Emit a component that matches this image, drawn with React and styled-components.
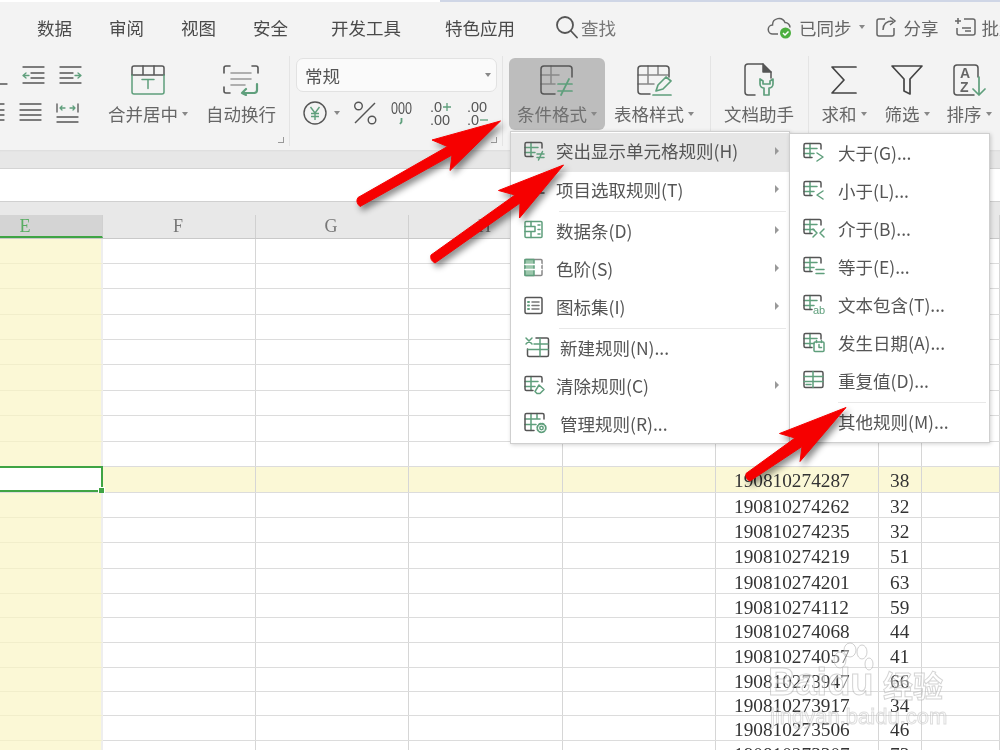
import React from "react";
import styled, { createGlobalStyle } from "styled-components";

const DARK = "#555";
const GREEN = "#5f9f7c";

const GlobalStyle = createGlobalStyle`
  html, body { margin: 0; padding: 0; background: #fff; }
  body { font-family: "Noto Sans CJK SC", "Noto Sans", sans-serif; }
`;

const Page = styled.div`
  position: relative;
  width: 1000px;
  height: 750px;
  overflow: hidden;
  background: #fff;
  filter: blur(0.4px);
`;

const TopEdge = styled.div`
  height: 2px;
  margin-left: 440px;
  background: #cfd6e6;
`;

const TabBar = styled.div`
  display: flex;
  align-items: center;
  height: 50px;
  padding: 0 0 0 37px;
  box-sizing: border-box;
  background: #f3f3f3;
  white-space: nowrap;
  font-size: 17.5px;
  color: #4a4a4a;
`;

const Tab = styled.span`
  margin-left: ${(p) => p.$gap || 0}px;
`;

const SearchTab = styled.span`
  display: flex;
  align-items: center;
  gap: 3px;
  margin-left: 40px;
  color: #777;
`;

const TabRight = styled.div`
  display: flex;
  align-items: center;
  margin-left: 151px;
  color: #666;
`;

const TabAction = styled.span`
  display: flex;
  align-items: center;
  gap: 6px;
  margin-right: ${(p) => p.$gap || 0}px;
`;

const Caret = styled.i`
  display: inline-block;
  flex: none;
  width: 0;
  height: 0;
  margin-left: ${(p) => p.$gap ?? 4}px;
  border-left: 3.5px solid transparent;
  border-right: 3.5px solid transparent;
  border-top: 4px solid #888;
`;

const Ribbon = styled.div`
  display: flex;
  height: 98px;
  background: #f3f3f3;
  box-sizing: border-box;
  padding-top: 4px;
`;

const AlignBlock = styled.div`
  flex: none;
  width: 100px;
  padding-top: 9px;
  box-sizing: border-box;
`;

const ToolRow = styled.div`
  display: flex;
  gap: 14px;
  height: 37px;
  margin-left: ${(p) => p.$x}px;
`;

const BigButton = styled.div`
  display: flex;
  flex-direction: column;
  align-items: center;
  flex: none;
  width: ${(p) => p.$w}px;
  height: 72px;
  margin: 2px 0 0;
  padding-top: 4px;
  box-sizing: border-box;
  border-radius: 6px;
  background: ${(p) => (p.$active ? "#bdbdbd" : "transparent")};
  color: ${(p) => (p.$active ? "#6f6f6f" : "#666")};
`;

const IconSlot = styled.div`
  height: 35px;
  display: flex;
  align-items: center;
  justify-content: center;
`;

const BigLabel = styled.div`
  display: flex;
  align-items: center;
  margin-top: 4px;
  font-size: 17.5px;
  line-height: 26px;
  white-space: nowrap;
`;

const GroupEnd = styled.div`
  position: relative;
  flex: none;
  width: 1px;
  height: 90px;
  margin: 0 ${(p) => p.$right || 0}px 0 ${(p) => p.$left || 0}px;
  background: #e4e4e4;
`;

const CornerMark = styled.i`
  position: absolute;
  left: -11px;
  bottom: 3px;
  width: 5px;
  height: 5px;
  border-right: 1px solid #999;
  border-bottom: 1px solid #999;
`;

const NumberBlock = styled.div`
  flex: none;
  width: 201px;
  margin-top: 2px;
`;

const FormatSelect = styled.div`
  display: flex;
  align-items: center;
  justify-content: space-between;
  height: 34px;
  padding: 0 5px 0 8px;
  box-sizing: border-box;
  border: 1px solid #e2e2e2;
  border-radius: 7px;
  background: #fafafa;
  font-size: 17.5px;
  color: #555;
`;

const NumberRow = styled.div`
  display: flex;
  align-items: center;
  margin-top: 8px;
  padding-left: 7px;
`;

const NumberTool = styled.div`
  display: flex;
  align-items: center;
  margin-right: ${(p) => p.$gap}px;
`;

const Band = styled.div`
  height: 18px;
  background: #e7e7e7;
  box-shadow: inset 0 2px 2px -1px #dcdcdc;
`;

const FormulaBar = styled.div`
  height: 34px;
  box-sizing: border-box;
  background: #fff;
  border-top: 1px solid #d4d4d4;
  border-bottom: 1px solid #d0d0d0;
`;

const HeaderRow = styled.div`
  display: flex;
  align-items: flex-end;
  height: 37px;
  background: #e8e8e8;
  border-bottom: 1px solid #c9c9c9;
  box-sizing: border-box;
`;

const HeaderCell = styled.div`
  flex: none;
  width: ${(p) => p.$w}px;
  height: 23px;
  line-height: 23px;
  box-sizing: border-box;
  text-align: center;
  font-family: "Liberation Serif", serif;
  font-size: 18px;
  color: ${(p) => (p.$active ? "#58ad62" : "#777")};
  background: ${(p) => (p.$active ? "#d4d4d4" : "transparent")};
  border-right: 1px solid #d0d0d0;
  border-bottom: ${(p) => (p.$active ? "2px solid #3fa444" : "0")};
  /* column E starts off screen, so its letter sits left of the visible middle */
  padding-right: ${(p) => (p.$active ? 52 : 2)}px;
`;

const Row = styled.div`
  display: flex;
  height: ${(p) => p.$h}px;
  box-sizing: border-box;
  background: ${(p) => (p.$hot ? "#fbf8d6" : "#fff")};
  border-bottom: 1px solid #dcdcdc;
`;

const Cell = styled.div`
  position: relative;
  flex: none;
  width: ${(p) => p.$w}px;
  box-sizing: border-box;
  padding-left: ${(p) => p.$pad || 0}px;
  border-right: 1px solid #d6d6d6;
  font-family: "Liberation Serif", serif;
  font-size: 19.3px;
  line-height: 28px;
  color: #333;
  white-space: nowrap;
`;

const ECell = styled(Cell)`
  background: #fbf8d6;
  border-right: 2px solid #eeeeee;
  border-bottom: 1px solid #f1eecb;
  margin-bottom: -1px;
`;

const SelectedCell = styled(Cell)`
  background: #fff;
  border: 2px solid #3fa444;
  border-left: 0;
  margin-top: -1px;
`;

const FillHandle = styled.i`
  position: absolute;
  right: -4px;
  bottom: -4px;
  width: 5px;
  height: 5px;
  background: #3fa444;
  border: 1px solid #fff;
`;

const Menu = styled.div`
  position: absolute;
  left: ${(p) => p.$x}px;
  top: ${(p) => p.$y}px;
  width: ${(p) => p.$w}px;
  height: ${(p) => p.$h}px;
  box-sizing: border-box;
  padding-top: 1px;
  background: #fff;
  border: 1px solid #cfcfcf;
  box-shadow: 1px 1px 4px rgba(0, 0, 0, 0.18);
  font-size: 17.5px;
  color: #555;
`;

const MenuItem = styled.div`
  display: flex;
  align-items: center;
  box-sizing: border-box;
  height: ${(p) => p.$h || 38}px;
  padding: 0 0 4px 12px;
  background: ${(p) => (p.$on ? "#e6e6e6" : "transparent")};
  white-space: nowrap;
`;

const MenuIconSlot = styled.div`
  flex: none;
  display: flex;
  width: ${(p) => p.$w}px;
`;

const MenuText = styled.span`
  flex: 1;
`;

const SubArrow = styled.i`
  flex: none;
  width: 0;
  height: 0;
  margin-right: 10px;
  border-top: 4px solid transparent;
  border-bottom: 4px solid transparent;
  border-left: 4px solid #999;
`;

const MenuSep = styled.div`
  height: 1px;
  margin: ${(p) => p.$m || 0}px 3px ${(p) => p.$m || 0}px 48px;
  background: #e8e8e8;
`;

const Arrows = styled.svg`
  position: absolute;
  left: 0;
  top: 0;
  width: 1000px;
  height: 750px;
  filter: drop-shadow(3px 4px 3px rgba(0, 0, 0, 0.45));
  pointer-events: none;
`;

const WatermarkLogo = styled.div`
  position: absolute;
  left: 768px;
  top: 660px;
  font-family: "Liberation Sans", sans-serif;
  font-size: 38px;
  font-weight: 700;
  line-height: 44px;
  color: rgba(255, 255, 255, 0.45);
  -webkit-text-stroke: 1px rgba(170, 170, 170, 0.5);
`;

const WatermarkCn = styled.div`
  position: absolute;
  left: 883px;
  top: 662px;
  font-size: 30px;
  font-weight: 700;
  line-height: 44px;
  color: rgba(255, 255, 255, 0.4);
  -webkit-text-stroke: 1px rgba(170, 170, 170, 0.5);
`;

const WatermarkUrl = styled.div`
  position: absolute;
  left: 770px;
  top: 704px;
  font-family: "Liberation Sans", sans-serif;
  font-size: 22px;
  line-height: 26px;
  color: rgba(255, 255, 255, 0.4);
  -webkit-text-stroke: 1px rgba(170, 170, 170, 0.4);
`;

const WatermarkPaw = styled.svg`
  position: absolute;
  left: 826px;
  top: 642px;
  fill: rgba(255, 255, 255, 0.4);
  stroke: rgba(170, 170, 170, 0.55);
`;

const Ico = ({ w = 24, h = 22, sw = 1.5, children }) => (
  <svg width={w} height={h} viewBox={`0 0 ${w} ${h}`} fill="none" strokeWidth={sw} strokeLinecap="round" strokeLinejoin="round">
    {children}
  </svg>
);

// the small table most menu icons share, dark frame with green inner lines
const TableBase = () => (
  <>
    <path d="M2 7.5h13M2 12.5h10M8 2.5v14" stroke={GREEN} />
    <path d="M19 8V4a1.5 1.5 0 0 0-1.5-1.5h-14A1.5 1.5 0 0 0 2 4v11a1.5 1.5 0 0 0 1.5 1.5H10" stroke={DARK} />
  </>
);

const menuIcons = {
  neq: <Ico><TableBase /><path d="M14 14h7M14 17.5h7M19.5 11.5l-4 8.5" stroke={GREEN} /></Ico>,
  gt: <Ico><TableBase /><path d="M15 12l6 4-6 4" stroke={GREEN} /></Ico>,
  lt: <Ico><TableBase /><path d="M21 12l-6 4 6 4" stroke={GREEN} /></Ico>,
  between: <Ico><TableBase /><path d="M11 12l4 4-4 4M22 12l-4 4 4 4" stroke={GREEN} /></Ico>,
  eq: <Ico><TableBase /><path d="M14 14.5h8M14 18.5h8" stroke={GREEN} /></Ico>,
  text: (
    <Ico>
      <TableBase />
      <text x="11" y="21" fontFamily="Liberation Sans" fontSize="11" fill={GREEN}>ab</text>
    </Ico>
  ),
  date: (
    <Ico>
      <TableBase />
      <rect x="12" y="11" width="10" height="9.5" rx="1" stroke={GREEN} />
      <path d="M14.5 9.5v2M19.5 9.5v2M17 13.5v3h2.5" stroke={GREEN} />
    </Ico>
  ),
  dup: (
    <Ico>
      <rect x="2" y="2.5" width="19" height="16" rx="1.5" stroke={DARK} />
      <path d="M2 7.5h19M2 12.5h19M11 2.5v16" stroke={GREEN} />
      <path d="M4 15.5h5" stroke={GREEN} />
    </Ico>
  ),
  top: <Ico><TableBase /><path d="M13 15h8" stroke={DARK} /></Ico>,
  bars: (
    <Ico>
      <rect x="2" y="2.5" width="17" height="16" rx="1" stroke={GREEN} />
      <path d="M2 7.5h10v5H2M8 2.5v5M8 12.5v6M15 6h2M15 10.5h2M15 15h2" stroke={GREEN} />
    </Ico>
  ),
  scale: (
    <Ico>
      <rect x="2" y="2.5" width="17" height="16" rx="1" stroke="#888" />
      <rect x="2" y="2.5" width="9" height="16" fill="#9cc7ac" stroke={GREEN} />
      <path d="M2 7.5h17M2 12.5h17" stroke="#fff" />
    </Ico>
  ),
  iconset: (
    <Ico>
      <rect x="2" y="2.5" width="17" height="16" rx="1.5" stroke={DARK} />
      <path d="M9 7h7M9 10.5h7M9 14h7" stroke="#777" />
      <path d="M5 7h1M5 10.5h1M5 14h1" stroke={GREEN} strokeWidth="2" />
    </Ico>
  ),
  create: (
    <Ico w={28} h={24}>
      <path d="M3 3l6 6M9 3l-6 6" stroke={GREEN} />
      <path d="M13 3h11a1.5 1.5 0 0 1 1.5 1.5V20a1.5 1.5 0 0 1-1.5 1.5H6A1.5 1.5 0 0 1 4.5 20v-6" stroke={DARK} />
      <path d="M5 14.5h20M17 3v18M11 9h14" stroke={GREEN} />
    </Ico>
  ),
  clear: (
    <Ico>
      <TableBase />
      <path d="M16 11l5 4.5-4 4h-3l-2-2z" stroke={GREEN} />
    </Ico>
  ),
  manage: (
    <Ico w={26} h={24}>
      <path d="M2 8h15M2 13.5h11M8 2.5v17M14 2.5v5" stroke={GREEN} />
      <path d="M21 8V4a1.5 1.5 0 0 0-1.5-1.5h-16A1.5 1.5 0 0 0 2 4v14a1.5 1.5 0 0 0 1.5 1.5H11" stroke={DARK} />
      <circle cx="18.5" cy="17" r="1.7" stroke={GREEN} />
      <circle cx="18.5" cy="17" r="4.3" stroke={GREEN} strokeWidth="1.8" strokeDasharray="2 1.4" />
    </Ico>
  ),
};

const bigIcons = {
  merge: (
    <Ico w={36} h={32}>
      <path d="M2 11V4a2 2 0 0 1 2-2h28a2 2 0 0 1 2 2v7" stroke={DARK} />
      <path d="M2 11h32M13 2v9M24 2v9" stroke={DARK} />
      <path d="M2 11v17a2 2 0 0 0 2 2h28a2 2 0 0 0 2-2V11" stroke={GREEN} />
      <path d="M12 15.5h12M18 15.5v9" stroke={GREEN} />
    </Ico>
  ),
  wrap: (
    <Ico w={38} h={32} sw={1.6}>
      <path d="M2 9V4a2 2 0 0 1 2-2h4M30 2h4a2 2 0 0 1 2 2v5M2 23v4a2 2 0 0 0 2 2h4" stroke={DARK} />
      <path d="M9 9h20M9 15h20M9 21h14" stroke="#999" />
      <path d="M35 20v6a3 3 0 0 1-3 3H20M24 25l-4 4 4 2" stroke={GREEN} strokeWidth="2.2" />
    </Ico>
  ),
  cond: (
    <Ico w={36} h={32}>
      <path d="M2 11h18M2 20h14M12 2v18" stroke="#888" />
      <path d="M33 13V5a3 3 0 0 0-3-3H5a3 3 0 0 0-3 3v22a3 3 0 0 0 3 3h11" stroke={DARK} />
      <path d="M19 20h14M19 27h14M30 15l-8 16" stroke={GREEN} strokeWidth="1.7" />
    </Ico>
  ),
  style: (
    <Ico w={36} h={32}>
      <path d="M2 11h30M2 20h16M12 2v18M22 2v9" stroke="#888" />
      <path d="M33 13V5a3 3 0 0 0-3-3H5a3 3 0 0 0-3 3v22a3 3 0 0 0 3 3h9" stroke={DARK} />
      <path d="M20 27l2-6 8-8 5 4-8 8zM17 31h18" stroke={GREEN} strokeWidth="1.7" />
    </Ico>
  ),
  helper: (
    <Ico w={32} h={36}>
      <path d="M12 33H5a3 3 0 0 1-3-3V5a3 3 0 0 1 3-3h15l8 8v6" stroke={DARK} />
      <path d="M20 2v8h8" fill={DARK} stroke={DARK} />
      <path d="M17 17v5a4 4 0 0 0 4 4v7h5v-7a4 4 0 0 0 4-4v-5l-3 2v3h-7v-3z" stroke={GREEN} strokeWidth="1.7" />
    </Ico>
  ),
  sum: (
    <Ico w={28} h={32} sw={1.7}>
      <path d="M26 3H2l12 13L2 29h24" stroke="#444" />
    </Ico>
  ),
  filter: (
    <Ico w={34} h={34} sw={1.7}>
      <path d="M2 3h30L20 16v15l-6-3V16z" stroke="#444" />
    </Ico>
  ),
  sort: (
    <Ico w={34} h={34}>
      <path d="M26 14V5a3 3 0 0 0-3-3H5a3 3 0 0 0-3 3v24a3 3 0 0 0 3 3h17" stroke={DARK} />
      <text x="8" y="15" fontFamily="Liberation Sans" fontSize="14" fontWeight="700" fill="#666">A</text>
      <text x="8" y="29" fontFamily="Liberation Sans" fontSize="14" fontWeight="700" fill="#666">Z</text>
      <path d="M27 14v18M21 26l6 6 6-6" stroke={GREEN} strokeWidth="1.7" />
    </Ico>
  ),
};

const SmallIcon = ({ lines, green }) => (
  <Ico w={23} h={22} sw={1.3}>
    <path d={lines} stroke={DARK} />
    {green && <path d={green} stroke={GREEN} />}
  </Ico>
);

const TabCloud = () => (
  <svg width="26" height="26" viewBox="0 0 26 26" fill="none" stroke="#666" strokeWidth="1.5">
    <path d="M11 20H6a4.5 4.5 0 0 1-.5-9A6.5 6.5 0 0 1 18 8.5a5 5 0 0 1 5 5" />
    <circle cx="18.5" cy="19" r="5.5" fill="#4caf3f" stroke="none" />
    <path d="M16 19l2 2 3.5-3.5" stroke="#fff" />
  </svg>
);

const TabSearch = () => (
  <svg width="23" height="24" viewBox="0 0 23 24" fill="none" stroke="#555" strokeWidth="1.8" strokeLinecap="round">
    <circle cx="10" cy="10" r="8" />
    <path d="M16 16l6 6.5" />
  </svg>
);

const TabShare = () => (
  <svg width="22" height="22" viewBox="0 0 22 22" fill="none" stroke="#666" strokeWidth="1.5">
    <path d="M9 3H3a2 2 0 0 0-2 2v13a2 2 0 0 0 2 2h13a2 2 0 0 0 2-2v-6" />
    <path d="M7 14c0-6 4-9 10-9M14 1l5 4-5 4" />
  </svg>
);

const TabBatch = () => (
  <svg width="22" height="22" viewBox="0 0 22 22" fill="none" stroke="#666" strokeWidth="1.5">
    <path d="M1 5h6M4 2v6M10 3h9a2 2 0 0 1 2 2v12a2 2 0 0 1-2 2H5a2 2 0 0 1-2-2v-5M8 12h9M11 15h6" />
  </svg>
);

const YenIcon = () => (
  <svg width="24" height="24" viewBox="0 0 24 24" fill="none" strokeWidth="1.4">
    <circle cx="12" cy="12" r="11" stroke={DARK} />
    <path d="M7.5 6l4.5 6 4.5-6M12 12v7M8 12.5h8M8 15.5h8" stroke={GREEN} />
  </svg>
);

const PercentIcon = () => (
  <svg width="24" height="24" viewBox="0 0 24 24" fill="none" stroke={DARK} strokeWidth="1.4">
    <circle cx="5.5" cy="5" r="3.8" />
    <circle cx="19" cy="19" r="3.8" />
    <path d="M2 22L22 2" />
  </svg>
);

const ThousandIcon = () => (
  <svg width="21" height="26" viewBox="0 0 21 26" fill="none">
    <text x="0" y="14" fontFamily="Liberation Sans" fontSize="16" textLength="21" lengthAdjust="spacingAndGlyphs" fill={DARK}>000</text>
    <path d="M10.5 18v4l-1.5 2" stroke={GREEN} strokeWidth="1.8" />
  </svg>
);

const DecimalIcon = ({ plus }) => (
  <svg width="23" height="26" viewBox="0 0 23 26">
    <text x="0" y="12" fontFamily="Liberation Sans" fontSize="14.5" fill={DARK}>{plus ? ".0" : ".00"}</text>
    <text x="0" y="25" fontFamily="Liberation Sans" fontSize="14.5" fill={DARK}>{plus ? ".00" : ".0"}</text>
    {plus ? (
      <path d="M13 7h8M17 3v8" stroke={GREEN} strokeWidth="1.3" fill="none" />
    ) : (
      <path d="M13 20h8" stroke={GREEN} strokeWidth="1.3" fill="none" />
    )}
  </svg>
);

const columns = [103, 153, 153, 154, 153, 163, 43, 78];
const headers = ["E", "F", "G", "H", "", "", "", ""];
const rowHeights = [25, 25, 26, 25, 25, 26, 25, 26, 25, 26, 25, 25, 26, 25, 24, 25, 25, 24, 24, 25, 25];
const data = [
  ["190810274287", "38"],
  ["190810274262", "32"],
  ["190810274235", "32"],
  ["190810274219", "51"],
  ["190810274201", "63"],
  ["190810274112", "59"],
  ["190810274068", "44"],
  ["190810274057", "41"],
  ["190810273947", "66"],
  ["190810273917", "34"],
  ["190810273506", "46"],
  ["190810273307", "73"],
];

const mainMenu = [
  { icon: "neq", text: "突出显示单元格规则(H)", sub: true, on: true, h: 39 },
  { icon: "top", text: "项目选取规则(T)", sub: true },
  { sep: true, m: 1 },
  { icon: "bars", text: "数据条(D)", sub: true },
  { icon: "scale", text: "色阶(S)", sub: true },
  { icon: "iconset", text: "图标集(I)", sub: true },
  { sep: true, m: 1 },
  { icon: "create", text: "新建规则(N)...", wide: true },
  { icon: "clear", text: "清除规则(C)", sub: true },
  { icon: "manage", text: "管理规则(R)...", wide: true },
];

const subMenu = [
  { icon: "gt", text: "大于(G)..." },
  { icon: "lt", text: "小于(L)..." },
  { icon: "between", text: "介于(B)..." },
  { icon: "eq", text: "等于(E)..." },
  { icon: "text", text: "文本包含(T)..." },
  { icon: "date", text: "发生日期(A)..." },
  { icon: "dup", text: "重复值(D)..." },
  { sep: true, m: 1 },
  { text: "其他规则(M)..." },
];

export default function App() {
  return (
    <Page>
      <GlobalStyle />
      <TopEdge />
      <TabBar>
        <Tab>数据</Tab>
        <Tab $gap={37}>审阅</Tab>
        <Tab $gap={37}>视图</Tab>
        <Tab $gap={37}>安全</Tab>
        <Tab $gap={43}>开发工具</Tab>
        <Tab $gap={44}>特色应用</Tab>
        <SearchTab>
          <TabSearch />
          查找
        </SearchTab>
        <TabRight>
          <TabAction $gap={11}>
            <TabCloud />
            <span>已同步</span>
            <Caret $gap={1} />
          </TabAction>
          <TabAction $gap={15}>
            <TabShare />
            <span>分享</span>
          </TabAction>
          <TabAction>
            <TabBatch />
            <span>批量</span>
          </TabAction>
        </TabRight>
      </TabBar>

      <Ribbon>
        <AlignBlock>
          <ToolRow $x={-15}>
            <SmallIcon lines="M1 19h21" />
            <SmallIcon lines="M1 2h21M9 8h13M9 13h13M1 18h21" green="M1 10.5h6M1 10.5l3-2.5M1 10.5l3 2.5" />
            <SmallIcon lines="M1 2h21M1 8h13M1 13h13M1 18h21" green="M16 10.5h6M22 10.5l-3-2.5M22 10.5l-3 2.5" />
          </ToolRow>
          <ToolRow $x={-18}>
            <SmallIcon lines="M1 2h21M5 8h17M1 13h21M5 18h17" />
            <SmallIcon lines="M1 2h21M1 8h21M1 13h21M1 18h21" />
            <SmallIcon lines="M1 15h21M1 20h21M1 2v8M22 2v8" green="M4 6h5M4 6l2-2M4 6l2 2M19 6h-5M19 6l-2-2M19 6l-2 2" />
          </ToolRow>
        </AlignBlock>
        <BigButton $w={96}>
          <IconSlot>{bigIcons.merge}</IconSlot>
          <BigLabel>合并居中<Caret /></BigLabel>
        </BigButton>
        <BigButton $w={90}>
          <IconSlot>{bigIcons.wrap}</IconSlot>
          <BigLabel>自动换行</BigLabel>
        </BigButton>
        <GroupEnd $left={3} $right={6}><CornerMark /></GroupEnd>
        <NumberBlock>
          <FormatSelect>常规<Caret /></FormatSelect>
          <NumberRow>
            <NumberTool $gap={13}><YenIcon /><Caret $gap={7} /></NumberTool>
            <NumberTool $gap={14}><PercentIcon /></NumberTool>
            <NumberTool $gap={18}><ThousandIcon /></NumberTool>
            <NumberTool $gap={14}><DecimalIcon plus /></NumberTool>
            <NumberTool $gap={0}><DecimalIcon /></NumberTool>
          </NumberRow>
        </NumberBlock>
        <GroupEnd $left={5} $right={6}><CornerMark /></GroupEnd>
        <BigButton $w={96} $active>
          <IconSlot>{bigIcons.cond}</IconSlot>
          <BigLabel>条件格式<Caret /></BigLabel>
        </BigButton>
        <BigButton $w={98}>
          <IconSlot>{bigIcons.style}</IconSlot>
          <BigLabel>表格样式<Caret /></BigLabel>
        </BigButton>
        <GroupEnd $left={7} $right={3} />
        <BigButton $w={90}>
          <IconSlot>{bigIcons.helper}</IconSlot>
          <BigLabel>文档助手</BigLabel>
        </BigButton>
        <GroupEnd $left={4} $right={3} />
        <BigButton $w={64}>
          <IconSlot>{bigIcons.sum}</IconSlot>
          <BigLabel>求和<Caret /></BigLabel>
        </BigButton>
        <BigButton $w={62}>
          <IconSlot>{bigIcons.filter}</IconSlot>
          <BigLabel>筛选<Caret /></BigLabel>
        </BigButton>
        <BigButton $w={62}>
          <IconSlot>{bigIcons.sort}</IconSlot>
          <BigLabel>排序<Caret /></BigLabel>
        </BigButton>
      </Ribbon>

      <Band />
      <FormulaBar />
      <HeaderRow>
        {columns.map((w, i) => (
          <HeaderCell key={i} $w={w} $active={i === 0}>{headers[i]}</HeaderCell>
        ))}
      </HeaderRow>

      {rowHeights.map((h, r) => {
        const hot = r === 9;
        const values = r >= 9 ? data[r - 9] : null;
        return (
          <Row key={r} $h={h} $hot={hot}>
            {hot ? (
              <SelectedCell $w={columns[0]}><FillHandle /></SelectedCell>
            ) : (
              <ECell $w={columns[0]} />
            )}
            {columns.slice(1).map((w, c) => {
              if (c === 4) return <Cell key={c} $w={w} $pad={18}>{values && values[0]}</Cell>;
              if (c === 5) return <Cell key={c} $w={w} $pad={11}>{values && values[1]}</Cell>;
              return <Cell key={c} $w={w} />;
            })}
          </Row>
        );
      })}

      <WatermarkLogo>Baidu</WatermarkLogo>
      <WatermarkCn>经验</WatermarkCn>
      <WatermarkUrl>jingyan.baidu.com</WatermarkUrl>
      <WatermarkPaw width="48" height="42" viewBox="0 0 48 42">
        <ellipse cx="14" cy="18" rx="6" ry="8" />
        <ellipse cx="24" cy="8" rx="6" ry="7" />
        <ellipse cx="36" cy="10" rx="5" ry="7" />
        <ellipse cx="43" cy="22" rx="4" ry="6" />
      </WatermarkPaw>

      <Menu $x={510} $y={131} $w={280} $h={313}>
        {mainMenu.map((item, i) =>
          item.sep ? (
            <MenuSep key={i} $m={item.m} />
          ) : (
            <MenuItem key={i} $on={item.on} $h={item.h}>
              <MenuIconSlot $w={item.wide ? 37 : 33}>{menuIcons[item.icon]}</MenuIconSlot>
              <MenuText>{item.text}</MenuText>
              {item.sub && <SubArrow />}
            </MenuItem>
          )
        )}
      </Menu>

      <Menu $x={789} $y={133} $w={201} $h={310}>
        {subMenu.map((item, i) =>
          item.sep ? (
            <MenuSep key={i} $m={item.m} />
          ) : (
            <MenuItem key={i}>
              <MenuIconSlot $w={36}>{item.icon && menuIcons[item.icon]}</MenuIconSlot>
              <MenuText>{item.text}</MenuText>
            </MenuItem>
          )
        )}
      </Menu>

      <Arrows viewBox="0 0 1000 750">
        <g fill="#f60000" stroke="#f60000" strokeWidth="1" strokeLinejoin="round">
          <path d="M500.5 121L432 140L447.5 146.5L358 197.5Q355 202 360 206.5L452 155L450 170.5Z" />
          <path d="M563.5 165L498.5 190.5L515 195L431 255Q429.5 260 435 263L520 203L519.5 218Z" />
          <path d="M846 407.5L779.5 433.5L795 438L746 473.5Q745 479 750 481L802 446.5L800 461.5Z" />
        </g>
      </Arrows>
    </Page>
  );
}
